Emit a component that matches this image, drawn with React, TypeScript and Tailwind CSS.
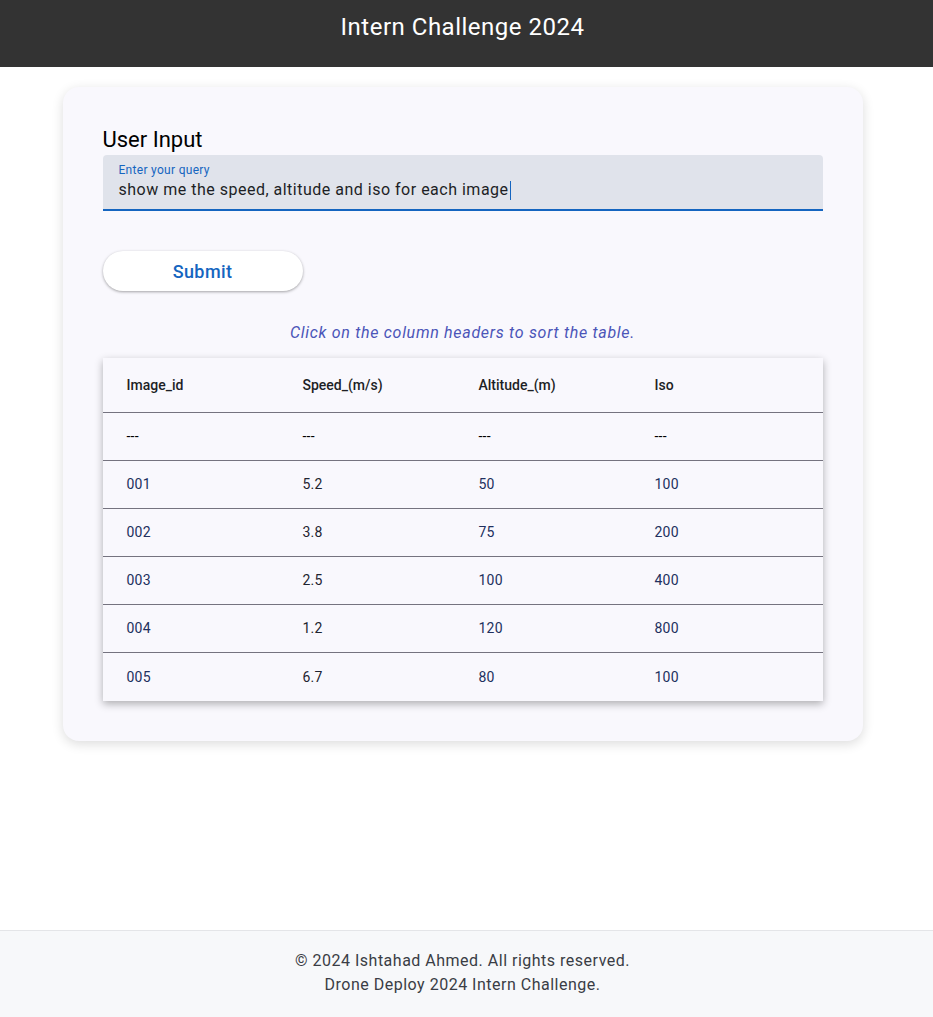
import React from 'react';

const columns = ['Image_id', 'Speed_(m/s)', 'Altitude_(m)', 'Iso'];

const rows = [
  ['---', '---', '---', '---'],
  ['001', '5.2', '50', '100'],
  ['002', '3.8', '75', '200'],
  ['003', '2.5', '100', '400'],
  ['004', '1.2', '120', '800'],
  ['005', '6.7', '80', '100'],
];

export default function App() {
  return (
    <div className="min-h-screen flex flex-col bg-white font-['Roboto','Liberation_Sans',sans-serif]">
      {/* header */}
      <header className="h-[67px] bg-[#333333] flex items-center justify-center pr-[8px]">
        <h1 className="text-[24px] text-white tracking-[0.5px] -mt-[14px]">Intern Challenge 2024</h1>
      </header>

      {/* main card */}
      <main className="flex justify-center pt-[20px] pb-[40px] pr-[8px]">
        <div className="w-[800px] bg-[#f9f8fd] rounded-[16px] shadow-[0_3px_12px_rgba(0,0,0,0.14)] px-[40px] pt-[41px] pb-[40px]">
          <h2 className="text-[22px] leading-[24px] text-black">User Input</h2>

          <div className="mt-[3px] h-[56px] bg-[#e0e3eb] rounded-t-[4px] border-b-2 border-[#1565c0] px-[16px] pt-[7px]">
            <div className="text-[12px] leading-[16px] text-[#1565c0] tracking-[0.3px]">Enter your query</div>
            <div className="text-[16px] leading-[24px] text-[#1d1f26] tracking-[0.5px] flex items-center">
              show me the speed, altitude and iso for each image
              <span className="inline-block w-[1px] h-[19px] bg-[#1565c0] ml-[1px]" />
            </div>
          </div>

          <button className="mt-[40px] w-[200px] h-[40px] rounded-full bg-white shadow-[0_1px_3px_rgba(0,0,0,0.35)] text-[18px] font-medium text-[#1565c0] tracking-[0.4px]">
            Submit
          </button>

          <p className="mt-[30px] text-center italic text-[16px] leading-[24px] text-[#4b55b8] tracking-[0.7px]">
            Click on the column headers to sort the table.
          </p>

          {/* table */}
          <div className="mt-[13px] bg-[#f9f8fd] shadow-[0_3px_8px_rgba(0,0,0,0.3)]">
            <div className="grid grid-cols-[176px_176px_176px_1fr] h-[55px] items-center border-b border-[#75737f]">
              {columns.map((c) => (
                <div key={c} className="pl-[24px] text-[14px] font-medium text-[#1d1f26] cursor-pointer">
                  {c}
                </div>
              ))}
            </div>
            {rows.map((r, i) => (
              <div
                key={i}
                className={
                  'grid grid-cols-[176px_176px_176px_1fr] h-[48px] items-center ' +
                  (i < rows.length - 1 ? 'border-b border-[#75737f]' : '')
                }
              >
                {r.map((v, j) => (
                  <div
                    key={j}
                    className={
                      'pl-[24px] text-[14px] tracking-[0.2px] ' +
                      (i === 0 ? 'text-black' : j === 1 ? 'text-[#1f2430]' : 'text-[#22305e]')
                    }
                  >
                    {v}
                  </div>
                ))}
              </div>
            ))}
          </div>
        </div>
      </main>

      {/* footer */}
      <footer className="mt-auto bg-[#f7f8fa] border-t border-[#e4e5e8] pt-[18px] pb-[20px] pr-[8px] text-center text-[16px] leading-[24px] text-[#3a3d45] tracking-[0.5px]">
        <p>© 2024 Ishtahad Ahmed. All rights reserved.</p>
        <p>Drone Deploy 2024 Intern Challenge.</p>
      </footer>
    </div>
  );
}
